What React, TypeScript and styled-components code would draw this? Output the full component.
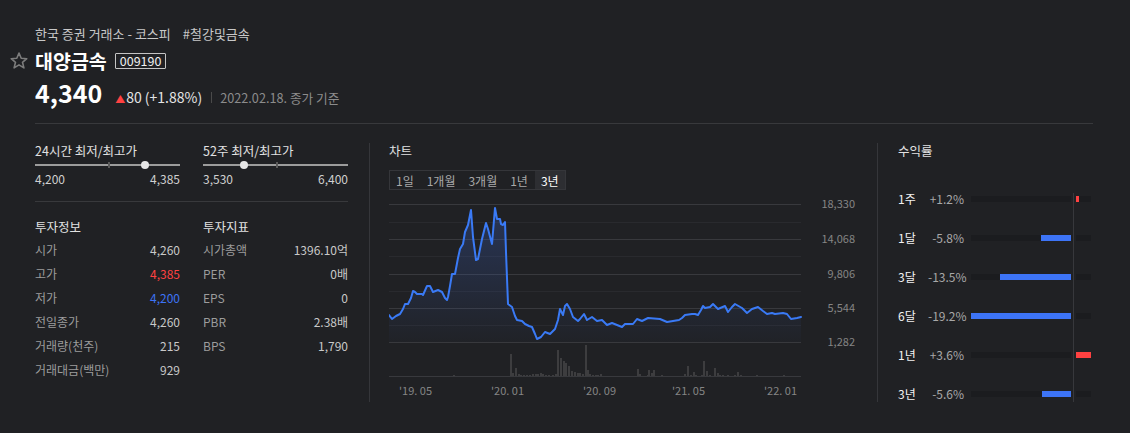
import React from 'react'
import styled, { createGlobalStyle } from 'styled-components'

const GlobalStyle = createGlobalStyle`
  body {
    margin: 0;
    background: #202124;
    font-family: "Noto Sans CJK KR", "Noto Sans", sans-serif;
    color: #ddd;
  }
`

const RED = '#ff4141'
const BLUE = '#3d74f6'

const Page = styled.div`
  width: 1130px;
  box-sizing: border-box;
  padding: 26px 37px 0 35px;
`

const Breadcrumb = styled.div`
  font-size: 13px;
  line-height: 16px;
  color: #c8c8c8;
`

const Tag = styled.span`
  margin-left: 12px;
`

const TitleRow = styled.div`
  display: flex;
  align-items: center;
  gap: 7px;
  height: 20px;
  margin: 9px 0 0 -25px;
`

const Name = styled.h1`
  margin: 0;
  font-size: 19.5px;
  line-height: 20px;
  font-weight: 700;
  color: #fff;
`

const Code = styled.span`
  border: 1px solid #c4c4c4;
  border-radius: 1px;
  font-size: 12.5px;
  line-height: 14px;
  padding: 0 4px;
  margin-left: 1px;
  color: #f0f0f0;
`

const PriceRow = styled.div`
  display: flex;
  align-items: baseline;
  margin-top: 7px;
  height: 28px;
`

const Price = styled.span`
  font-size: 25px;
  line-height: 28px;
  font-weight: 700;
  color: #fff;
`

const Change = styled.span`
  margin-left: 13px;
  font-size: 14px;
  color: #e4e4e4;
`

const UpMark = styled.span`
  color: ${RED};
  font-size: 10px;
  margin-right: 1px;
`

const Bar = styled.span`
  display: inline-block;
  width: 1px;
  height: 11px;
  background: #4a4a4a;
  margin: 0 8px 0 9px;
`

const DateText = styled.span`
  font-size: 12.7px;
  color: #8c8c8c;
`

const Rule = styled.div`
  height: 1px;
  background: #38393c;
  margin-top: 17px;
`

const Body = styled.div`
  display: flex;
  padding-top: 19px;
  height: 259px;
`

const Divider = styled.div<{ $gapLeft: number; $gapRight: number }>`
  width: 1px;
  background: #35363a;
  margin: 0 ${p => p.$gapRight}px 0 ${p => p.$gapLeft}px;
`

const LeftPanel = styled.section`
  width: 313px;
`

const TwoCol = styled.div`
  display: grid;
  grid-template-columns: 145px 145px;
  column-gap: 23px;
`

const SectionTitle = styled.div`
  font-size: 12.5px;
  line-height: 16px;
  color: #e2e2e2;
`

const SliderTrack = styled.div`
  position: relative;
  height: 12px;
  &::before {
    content: '';
    position: absolute;
    left: 0;
    right: 0;
    top: 5px;
    height: 2px;
    background: #9c9c9c;
  }
`

const SliderTick = styled.span`
  position: absolute;
  left: 50%;
  top: 3px;
  width: 2px;
  height: 6px;
  background: #5a5a5a;
`

const SliderDot = styled.span`
  position: absolute;
  top: 2px;
  width: 8px;
  height: 8px;
  margin-left: -4px;
  border-radius: 50%;
  background: #e6e6e6;
`

const RangeValues = styled.div`
  display: flex;
  justify-content: space-between;
  font-size: 12px;
  line-height: 16px;
  color: #d0d0d0;
`

const Separator = styled.div`
  height: 1px;
  background: #38393c;
  margin: 14px 0 17px;
`

const InfoList = styled.div`
  margin-top: 3px;
`

const InfoRow = styled.div`
  display: flex;
  justify-content: space-between;
  font-size: 12px;
  line-height: 24px;
`

const InfoLabel = styled.span`
  color: #9c9c9c;
`

const InfoValue = styled.span<{ $tone?: 'up' | 'down' }>`
  color: ${p => (p.$tone === 'up' ? RED : p.$tone === 'down' ? BLUE : '#c9c9c9')};
`

const ChartPanel = styled.section`
  width: 467px;
`

const Tabs = styled.div`
  display: inline-flex;
  margin-top: 11px;
  border: 1px solid #35363a;
  height: 18px;
  align-items: stretch;
`

const Tab = styled.span<{ $active?: boolean }>`
  display: flex;
  align-items: center;
  padding: 0 6px;
  font-size: 12px;
  color: ${p => (p.$active ? '#fff' : '#a8a8a8')};
  background: ${p => (p.$active ? '#2d2e32' : 'transparent')};
  & + & {
    margin-left: 1px;
  }
`

const ChartSvg = styled.svg`
  display: block;
  margin-top: 1px;
  font-family: "Noto Sans CJK KR", "Noto Sans", sans-serif;
`

const ReturnPanel = styled.section`
  width: 195px;
`

const ReturnList = styled.div`
  position: relative;
  margin-top: 20px;
  &::before {
    content: '';
    position: absolute;
    left: 175px;
    top: 14px;
    height: 209px;
    width: 1px;
    background: #37383c;
  }
`

const ReturnRow = styled.div`
  display: flex;
  align-items: center;
  height: 39px;
  font-size: 12px;
`

const Period = styled.span`
  width: 30px;
  color: #f2f2f2;
`

const Pct = styled.span`
  width: 36px;
  text-align: right;
  color: #a8a8a8;
`

const NegTrack = styled.div`
  width: 100px;
  height: 6px;
  margin-left: 7px;
  background: #1b1c1f;
  display: flex;
  justify-content: flex-end;
`

const PosTrack = styled.div`
  width: 15px;
  height: 6px;
  margin-left: 5px;
  background: #1b1c1f;
  display: flex;
`

const Fill = styled.span<{ $up?: boolean }>`
  height: 100%;
  background: ${p => (p.$up ? RED : BLUE)};
`

function StarIcon() {
  return (
    <svg width="18" height="18" viewBox="0 0 18 18">
      <polygon
        points="9,1 11.2,6.3 16.8,6.7 12.5,10.3 13.9,15.9 9,12.9 4.1,15.9 5.5,10.3 1.2,6.7 6.8,6.3"
        fill="none"
        stroke="#7c7c7c"
        strokeWidth="1.6"
        strokeLinejoin="round"
      />
    </svg>
  )
}

function Slider({ low, high, current }: { low: number; high: number; current: number }) {
  const pct = ((current - low) / (high - low)) * 100
  return (
    <SliderTrack>
      <SliderTick />
      <SliderDot style={{ left: `${pct}%` }} />
    </SliderTrack>
  )
}

const LINE: [number, number][] = [
  [389, 313], [392, 317], [396, 314], [400, 312], [403, 307], [405, 302], [408, 302], [411, 296],
  [413, 289], [415, 290], [417, 292], [422, 292], [423, 293], [427, 284], [430, 284], [433, 290],
  [438, 288], [442, 290], [445, 296], [447, 298], [448, 295], [450, 284], [452, 272], [455, 272],
  [458, 256], [460, 247], [463, 242], [465, 230], [468, 223], [471, 208], [473, 235], [476, 258],
  [478, 257], [482, 237], [486, 221], [488, 227], [492, 242], [495, 206], [497, 217], [500, 217],
  [501, 222], [503, 223], [505, 220], [506, 250], [508, 302], [512, 305], [515, 314], [517, 318],
  [522, 319], [525, 322], [529, 324], [532, 325], [535, 332], [537, 337], [541, 335], [545, 330],
  [550, 332], [555, 327], [558, 318], [560, 307], [563, 313], [565, 304], [567, 302], [570, 307],
  [573, 315], [578, 319], [580, 317], [584, 312], [587, 318], [592, 315], [597, 319], [602, 318],
  [607, 323], [612, 321], [617, 323], [622, 325], [625, 322], [633, 322], [637, 317], [642, 319],
  [648, 316], [660, 317], [667, 320], [673, 319], [679, 318], [682, 316], [685, 313], [692, 312],
  [695, 312], [698, 313], [701, 308], [703, 304], [705, 306], [710, 305], [713, 302], [718, 307],
  [725, 304], [728, 310], [732, 305], [735, 302], [742, 306], [747, 311], [752, 307], [758, 305],
  [763, 309], [767, 312], [772, 311], [775, 312], [783, 311], [787, 312], [791, 317], [797, 316],
  [801, 315],
]

const VOLUME: [number, number][] = [
  [453, 1], [510, 22], [512, 3], [515, 8], [518, 2], [520, 1], [523, 1], [526, 1], [529, 1],
  [532, 2], [535, 2], [537, 2], [540, 3], [542, 2], [545, 1], [548, 1], [552, 1], [555, 2],
  [557, 26], [560, 18], [563, 15], [565, 13], [568, 10], [571, 5], [574, 4], [577, 3], [579, 3],
  [582, 2], [585, 31], [587, 6], [589, 2], [592, 1], [595, 1], [597, 1], [600, 2], [637, 7],
  [639, 2], [647, 1], [648, 6], [651, 3], [653, 6], [661, 1], [684, 2], [687, 10], [690, 1],
  [693, 4], [695, 1], [701, 1], [703, 15], [706, 5], [709, 1], [714, 8], [717, 3], [719, 1],
  [722, 1], [727, 1], [734, 1], [737, 4], [740, 1], [756, 1], [783, 1],
]

const MAJOR = [
  { y: 202, label: '18,330' },
  { y: 237, label: '14,068' },
  { y: 272, label: '9,806' },
  { y: 306, label: '5,544' },
  { y: 340, label: '1,282' },
]
const MINOR = [220, 254, 289, 323]
const X_LABELS = [
  { x: 399, label: "'19. 05" },
  { x: 491, label: "'20. 01" },
  { x: 583, label: "'20. 09" },
  { x: 672, label: "'21. 05" },
  { x: 764, label: "'22. 01" },
]

function PriceChart() {
  const pts = LINE.map(([x, y]) => `${x},${y}`).join(' ')
  const area = `389,340 ${pts} 801,340`
  return (
    <ChartSvg width="467" height="211" viewBox="389 190 467 211">
      <defs>
        <linearGradient id="area" x1="0" y1="200" x2="0" y2="340" gradientUnits="userSpaceOnUse">
          <stop offset="0" stopColor="#3c64c8" stopOpacity="0.32" />
          <stop offset="1" stopColor="#3c64c8" stopOpacity="0.02" />
        </linearGradient>
      </defs>
      {MINOR.map(y => (
        <line key={y} x1="389" x2="801" y1={y + 0.5} y2={y + 0.5} stroke="#292a2e" />
      ))}
      {MAJOR.map(m => (
        <g key={m.y}>
          <line x1="389" x2="801" y1={m.y + 0.5} y2={m.y + 0.5} stroke="#38393d" />
          <text x="855" y={m.y + 4} fontSize="11" fill="#858585" textAnchor="end">
            {m.label}
          </text>
        </g>
      ))}
      <polygon points={area} fill="url(#area)" />
      <polyline
        points={pts}
        fill="none"
        stroke="#3a7af5"
        strokeWidth="2"
        strokeLinejoin="round"
        strokeLinecap="round"
      />
      {VOLUME.map(([x, h]) => (
        <rect key={x} x={x} y={374 - h} width="2" height={h} fill="#3d3d3f" />
      ))}
      <line x1="389" x2="801" y1="374.5" y2="374.5" stroke="#38393d" />
      {X_LABELS.map(l => (
        <text key={l.x} x={l.x} y="393" fontSize="11" fill="#858585">
          {l.label}
        </text>
      ))}
    </ChartSvg>
  )
}

const INFO = [
  { label: '시가', value: '4,260' },
  { label: '고가', value: '4,385', tone: 'up' as const },
  { label: '저가', value: '4,200', tone: 'down' as const },
  { label: '전일종가', value: '4,260' },
  { label: '거래량(천주)', value: '215' },
  { label: '거래대금(백만)', value: '929' },
]

const METRICS = [
  { label: '시가총액', value: '1396.10억' },
  { label: 'PER', value: '0배' },
  { label: 'EPS', value: '0' },
  { label: 'PBR', value: '2.38배' },
  { label: 'BPS', value: '1,790' },
]

const RETURNS = [
  { period: '1주', pct: '+1.2%', neg: 0, pos: 3 },
  { period: '1달', pct: '-5.8%', neg: 30, pos: 0 },
  { period: '3달', pct: '-13.5%', neg: 71, pos: 0 },
  { period: '6달', pct: '-19.2%', neg: 100, pos: 0 },
  { period: '1년', pct: '+3.6%', neg: 0, pos: 15 },
  { period: '3년', pct: '-5.6%', neg: 29, pos: 0 },
]

const TABS = ['1일', '1개월', '3개월', '1년', '3년']

export default function App() {
  return (
    <Page>
      <GlobalStyle />
      <Breadcrumb>
        한국 증권 거래소 - 코스피<Tag>#철강및금속</Tag>
      </Breadcrumb>
      <TitleRow>
        <StarIcon />
        <Name>대양금속</Name>
        <Code>009190</Code>
      </TitleRow>
      <PriceRow>
        <Price>4,340</Price>
        <Change>
          <UpMark>▲</UpMark>80 (+1.88%)
        </Change>
        <Bar />
        <DateText>2022.02.18. 종가 기준</DateText>
      </PriceRow>
      <Rule />

      <Body>
        <LeftPanel>
          <TwoCol>
            <div>
              <SectionTitle>24시간 최저/최고가</SectionTitle>
              <Slider low={4200} high={4385} current={4340} />
              <RangeValues>
                <span>4,200</span>
                <span>4,385</span>
              </RangeValues>
            </div>
            <div>
              <SectionTitle>52주 최저/최고가</SectionTitle>
              <Slider low={3530} high={6400} current={4340} />
              <RangeValues>
                <span>3,530</span>
                <span>6,400</span>
              </RangeValues>
            </div>
          </TwoCol>
          <Separator />
          <TwoCol>
            <div>
              <SectionTitle>투자정보</SectionTitle>
              <InfoList>
                {INFO.map(r => (
                  <InfoRow key={r.label}>
                    <InfoLabel>{r.label}</InfoLabel>
                    <InfoValue $tone={r.tone}>{r.value}</InfoValue>
                  </InfoRow>
                ))}
              </InfoList>
            </div>
            <div>
              <SectionTitle>투자지표</SectionTitle>
              <InfoList>
                {METRICS.map(r => (
                  <InfoRow key={r.label}>
                    <InfoLabel>{r.label}</InfoLabel>
                    <InfoValue>{r.value}</InfoValue>
                  </InfoRow>
                ))}
              </InfoList>
            </div>
          </TwoCol>
        </LeftPanel>

        <Divider $gapLeft={21} $gapRight={19} />

        <ChartPanel>
          <SectionTitle>차트</SectionTitle>
          <Tabs>
            {TABS.map(t => (
              <Tab key={t} $active={t === '3년'}>
                {t}
              </Tab>
            ))}
          </Tabs>
          <PriceChart />
        </ChartPanel>

        <Divider $gapLeft={21} $gapRight={20} />

        <ReturnPanel>
          <SectionTitle>수익률</SectionTitle>
          <ReturnList>
            {RETURNS.map(r => (
              <ReturnRow key={r.period}>
                <Period>{r.period}</Period>
                <Pct>{r.pct}</Pct>
                <NegTrack>
                  {r.neg > 0 && <Fill style={{ width: r.neg }} />}
                </NegTrack>
                <PosTrack>
                  {r.pos > 0 && <Fill $up style={{ width: r.pos }} />}
                </PosTrack>
              </ReturnRow>
            ))}
          </ReturnList>
        </ReturnPanel>
      </Body>
    </Page>
  )
}
